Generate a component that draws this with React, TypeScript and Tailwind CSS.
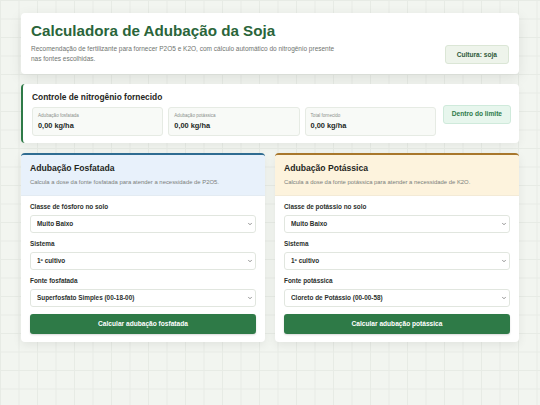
import React from 'react';
import { ChevronDown } from 'lucide-react';

interface FieldProps {
  label: string;
  value: string;
}

const Field: React.FC<FieldProps> = ({ label, value }) => (
  <div className="flex flex-col">
    <label className="block text-[6.4px] leading-[10px] font-bold text-[#2b302c]">{label}</label>
    <div className="relative mt-[3px] h-[18px] leading-none">
      <select
        defaultValue={value}
        className="block appearance-none w-full h-[18px] rounded-[3px] border border-[#e1e6df] bg-white pl-[6px] pr-[12px] text-[6.4px] leading-[16px] font-bold text-[#2b302c] font-['Liberation_Sans',Arial,sans-serif] outline-none"
      >
        <option>{value}</option>
      </select>
      <ChevronDown
        size={6}
        strokeWidth={2.5}
        className="absolute right-[3px] top-[6px] text-[#555] pointer-events-none"
      />
    </div>
  </div>
);

interface PanelProps {
  title: string;
  subtitle: string;
  tone: 'blue' | 'amber';
  fields: FieldProps[];
  action: string;
}

const Panel: React.FC<PanelProps> = ({ title, subtitle, tone, fields, action }) => (
  <div
    className={
      tone === 'blue'
        ? 'rounded-[4px] overflow-hidden bg-white border-t-2 border-[#2f6c91] shadow-[0_3px_10px_rgba(0,0,0,0.07)]'
        : 'rounded-[4px] overflow-hidden bg-white border-t-2 border-[#a8772c] shadow-[0_3px_10px_rgba(0,0,0,0.07)]'
    }
  >
    <div
      className={
        tone === 'blue'
          ? 'bg-[#e8f1fb] px-[9px] pt-[8px] pb-[9px] border-b border-[#e3ebf2]'
          : 'bg-[#fdf3dd] px-[9px] pt-[8px] pb-[9px] border-b border-[#f3ead6]'
      }
    >
      <h2 className="text-[8.6px] leading-[11px] font-bold text-[#1f2622]">{title}</h2>
      <p className="mt-[4px] text-[5.9px] leading-[8px] text-[#7b807c]">{subtitle}</p>
    </div>
    <div className="px-[9px] pt-[6px] pb-[8px] flex flex-col gap-[6px]">
      {fields.map(f => (
        <Field key={f.label} label={f.label} value={f.value} />
      ))}
      <button className="mt-[1px] h-[20px] rounded-[3px] bg-[#2e7a47] text-white text-[6.6px] font-bold shadow-[0_1px_2px_rgba(0,0,0,0.15)]">
        {action}
      </button>
    </div>
  </div>
);

const NitroBox: React.FC<{ label: string; value: string }> = ({ label, value }) => (
  <div className="rounded-[3px] border border-[#e6ebe4] bg-[#f8faf7] px-[5px] pt-[4px] pb-[4px]">
    <div className="text-[4.6px] leading-[7px] text-[#8c918d]">{label}</div>
    <div className="mt-[2px] text-[7.4px] leading-[10px] font-bold text-[#222824]">{value}</div>
  </div>
);

export default function App() {
  return (
    <div className="min-h-screen bg-[#f2f5f0] bg-[linear-gradient(to_right,#e7ebe5_1px,transparent_1px),linear-gradient(to_bottom,#e7ebe5_1px,transparent_1px)] bg-size-[18.5px_18.5px] font-['Liberation_Sans',Arial,sans-serif]">
      <div className="px-[21px] pt-[13px] pb-[20px] flex flex-col gap-[10px]">
        {/* header */}
        <div className="rounded-[4px] bg-white px-[10px] pt-[9px] pb-[10px] flex items-end justify-between shadow-[0_4px_14px_rgba(0,0,0,0.09)]">
          <div>
            <h1 className="text-[15.2px] leading-[18px] font-bold text-[#2a653a]">
              Calculadora de Adubação da Soja
            </h1>
            <p className="mt-[4px] max-w-[312px] text-[6.5px] leading-[10px] text-[#6f746f]">
              Recomendação de fertilizante para fornecer P2O5 e K2O, com cálculo automático do nitrogênio presente nas fontes escolhidas.
            </p>
          </div>
          <span className="h-[19px] px-[11px] flex items-center rounded-[3px] border border-[#dbe6d6] bg-[#eef4eb] text-[6.6px] font-bold text-[#2f5b3a]">
            Cultura: soja
          </span>
        </div>

        {/* nitrogen control */}
        <div className="rounded-[4px] bg-white border-l-2 border-[#2e7a47] pl-[9px] pr-[8px] pt-[8px] pb-[7px] flex items-center gap-[7px] shadow-[0_3px_10px_rgba(0,0,0,0.06)]">
          <div className="flex-1">
            <h3 className="text-[8.4px] leading-[10px] font-bold text-[#1f2622]">Controle de nitrogênio fornecido</h3>
            <div className="mt-[5px] grid grid-cols-3 gap-[5px]">
              <NitroBox label="Adubação fosfatada" value="0,00 kg/ha" />
              <NitroBox label="Adubação potássica" value="0,00 kg/ha" />
              <NitroBox label="Total fornecido" value="0,00 kg/ha" />
            </div>
          </div>
          <span className="h-[19px] px-[8px] flex items-center rounded-[3px] border border-[#cfeadb] bg-[#e7f6ed] text-[6.6px] font-bold text-[#2e7a4a]">
            Dentro do limite
          </span>
        </div>

        {/* panels */}
        <div className="grid grid-cols-2 gap-[10px]">
          <Panel
            tone="blue"
            title="Adubação Fosfatada"
            subtitle="Calcula a dose da fonte fosfatada para atender a necessidade de P2O5."
            fields={[
              { label: 'Classe de fósforo no solo', value: 'Muito Baixo' },
              { label: 'Sistema', value: '1º cultivo' },
              { label: 'Fonte fosfatada', value: 'Superfosfato Simples (00-18-00)' },
            ]}
            action="Calcular adubação fosfatada"
          />
          <Panel
            tone="amber"
            title="Adubação Potássica"
            subtitle="Calcula a dose da fonte potássica para atender a necessidade de K2O."
            fields={[
              { label: 'Classe de potássio no solo', value: 'Muito Baixo' },
              { label: 'Sistema', value: '1º cultivo' },
              { label: 'Fonte potássica', value: 'Cloreto de Potássio (00-00-58)' },
            ]}
            action="Calcular adubação potássica"
          />
        </div>
      </div>
    </div>
  );
}
